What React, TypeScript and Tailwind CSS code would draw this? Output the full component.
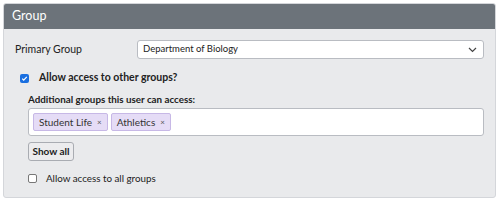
import React from "react";

export default function App() {
  return (
    <div className="w-[500px] h-[201px] bg-white p-[3px] pr-[4px]" style={{ fontFamily: "Lato, 'Open Sans', sans-serif" }}>
      <div className="h-[195px] border border-[#d4d6da] rounded-[3px] bg-[#e9eaec] flex flex-col overflow-hidden">
        <div className="h-[25px] bg-[#6c737a] text-white text-[12.5px] flex items-center px-[8px] shrink-0">Group</div>
        <div className="flex flex-col px-[10px] pt-[11px]">
          <div className="flex items-center">
            <div className="w-[123px] text-[10.5px] text-[#222] pl-[1px]">Primary Group</div>
            <div className="flex-1 mr-[1px] h-[19px] bg-white border border-[#b9bcc2] rounded-[3px] flex items-center justify-between pl-[5px] pr-[6px] text-[9.5px] text-[#222]">
              <span>Department of Biology</span>
              <svg width="9" height="6" viewBox="0 0 9 6" fill="none"><path d="M1 1l3.5 3.5L8 1" stroke="#444" strokeWidth="1.2" /></svg>
            </div>
          </div>
          <div className="flex items-center mt-[12px] pl-[6px] h-[14px]">
            <span className="w-[9px] h-[9px] rounded-[2px] bg-[#1a6fe0] flex items-center justify-center">
              <svg width="7" height="7" viewBox="0 0 7 7" fill="none"><path d="M1.2 3.6l1.5 1.5L5.8 1.8" stroke="white" strokeWidth="1.2" /></svg>
            </span>
            <span className="ml-[10px] text-[10.5px] font-bold text-[#222]">Allow access to other groups?</span>
          </div>
          <div className="pl-[14px] mt-[8px] flex flex-col">
            <div className="text-[9.8px] font-bold text-[#222] leading-[13px]">Additional groups this user can access:</div>
            <div className="mt-[2px] mr-[1px] h-[28px] bg-white border border-[#b9bcc2] rounded-[3px] flex items-center gap-[3px] pl-[4px]">
              <span className="h-[18px] px-[5px] bg-[#e5dcf6] border border-[#c7b8e6] rounded-[2px] flex items-center text-[10px] text-[#333]">
                Student Life<span className="ml-[5px] text-[8px] text-[#555]">×</span>
              </span>
              <span className="h-[18px] px-[5px] bg-[#e5dcf6] border border-[#c7b8e6] rounded-[2px] flex items-center text-[10px] text-[#333]">
                Athletics<span className="ml-[5px] text-[8px] text-[#555]">×</span>
              </span>
            </div>
            <div className="mt-[6px]">
              <button className="h-[19px] w-[46px] bg-[#ececee] border border-[#a9acb2] rounded-[3px] text-[10px] font-bold text-[#222] flex items-center justify-center">Show all</button>
            </div>
            <div className="flex items-center mt-[10px] h-[14px]">
              <span className="w-[9px] h-[9px] rounded-[2px] bg-white border border-[#777]"></span>
              <span className="ml-[9px] text-[9.8px] text-[#222]">Allow access to all groups</span>
            </div>
          </div>
        </div>
      </div>
    </div>
  );
}
